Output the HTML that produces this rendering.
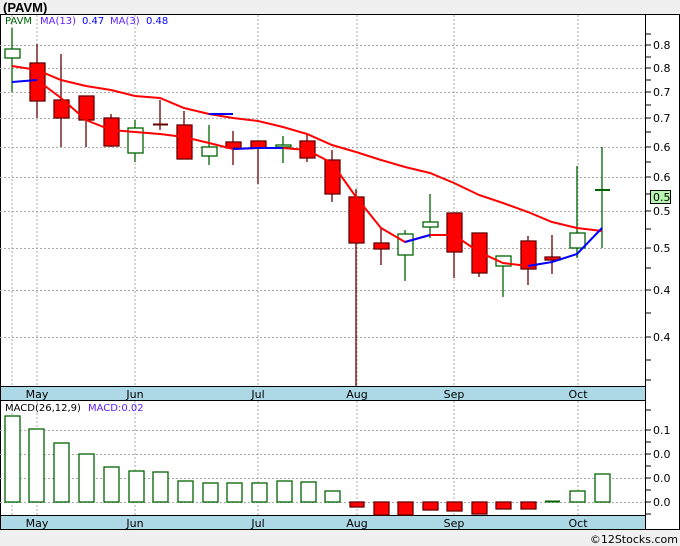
<!DOCTYPE html>
<html><head><style>
body{margin:0;width:680px;height:546px;overflow:hidden;background:#fff;font-family:"DejaVu Sans","Liberation Sans",sans-serif}
</style></head><body>
<svg width="680" height="546" xmlns="http://www.w3.org/2000/svg" style="position:absolute;left:0;top:0" font-family="DejaVu Sans, Liberation Sans, sans-serif">
<rect x="0" y="0" width="680" height="546" fill="#f0f0f0"/>
<text x="3" y="12" font-size="13" font-weight="bold" font-family="Liberation Sans, sans-serif" fill="#000">(PAVM)</text>
<rect x="0.5" y="14.5" width="679" height="515" fill="#fff" stroke="#000"/>
<!-- grids -->
<g stroke="#aaa" stroke-dasharray="2,2" stroke-width="1">
<path d="M12 15V387M37 15V387M135 15V387M258 15V387M357 15V387M454 15V387M578 15V387"/>
<path d="M12 401V516M37 401V516M135 401V516M258 401V516M357 401V516M454 401V516M578 401V516"/>
<path d="M0 45.5H645M0 68.5H645M0 92.5H645M0 118.5H645M0 147.5H645M0 177.5H645M0 211.5H645M0 248.5H645M0 290.5H645M0 337.5H645"/>
<path d="M0 430.5H645M0 454.5H645M0 478.5H645M0 502.5H645"/>
</g>
<!-- axis bands -->
<rect x="0.5" y="386.5" width="645" height="14" fill="#add8e6" stroke="#000"/>
<rect x="0.5" y="515.5" width="645" height="14" fill="#add8e6" stroke="#000"/>
<line x1="645.5" y1="14" x2="645.5" y2="530" stroke="#000"/>
<g font-size="11" fill="#000" text-anchor="middle">
<text x="37" y="398">May</text><text x="135" y="398">Jun</text><text x="258" y="398">Jul</text><text x="357" y="398">Aug</text><text x="454" y="398">Sep</text><text x="578" y="398">Oct</text>
<text x="37" y="527">May</text><text x="135" y="527">Jun</text><text x="258" y="527">Jul</text><text x="357" y="527">Aug</text><text x="454" y="527">Sep</text><text x="578" y="527">Oct</text>
</g>
<!-- right axis ticks -->
<g stroke="#000">
<path d="M645 34h6M645 45h6M645 57h6M645 68h6M645 80h6M645 92h6M645 105h6M645 118h6M645 132h6M645 147h6M645 162h6M645 177h6M645 194h6M645 211h6M645 229h6M645 248h6M645 268h6M645 290h6M645 313h6M645 337h6M645 360h6M645 380h6"/>
<path d="M645 410h6M645 430h6M645 442h6M645 454h6M645 466h6M645 478h6M645 490h6M645 502h6M645 514h6"/>
</g>
<g font-size="11" fill="#000">
<text x="653" y="49">0.8</text><text x="653" y="72">0.8</text><text x="653" y="96">0.7</text><text x="653" y="122">0.7</text><text x="653" y="151">0.6</text><text x="653" y="181">0.6</text><text x="653" y="215">0.5</text><text x="653" y="252">0.5</text><text x="653" y="294">0.4</text><text x="653" y="341">0.4</text>
<text x="653" y="434">0.1</text><text x="653" y="458">0.0</text><text x="653" y="482">0.0</text><text x="653" y="506">0.0</text>
</g>
<rect x="650.5" y="190.5" width="20" height="13" fill="#b8f5b0" stroke="#000"/>
<text x="653" y="201" font-size="11">0.5</text>
<!-- legend -->
<text x="5" y="24" font-size="10" fill="#006400">PAVM</text>
<text x="40" y="24" font-size="10" fill="#6020ff">MA(13)</text>
<text x="82" y="24" font-size="10" fill="#0000ff">0.47</text>
<text x="110" y="24" font-size="10" fill="#6020ff">MA(3)</text>
<text x="146" y="24" font-size="10" fill="#0000ff">0.48</text>
<text x="5" y="411" font-size="10" fill="#000">MACD(26,12,9)</text>
<text x="88" y="411" font-size="10" fill="#6020ff">MACD:0.02</text>
<!-- wicks -->
<g stroke-width="1.3">
<g stroke="#006400"><path d="M12 28V92M135 120V162M209 125V165M283 136V163M405 230V281M430 194V238M503 256V297M577 166V258M602 147V248"/></g>
<g stroke="#600"><path d="M37 44V118M61 54V147M86 96V147M111 114V147M160 100V130M184 111V147M233 131V165M258 141V184M307 135V162M332 150V202M356 189V386M381 228V265M454 213V278M479 233V277M528 236V285M552 235V274"/></g>
</g>
<!-- bodies -->
<g stroke="#006400" stroke-width="1.3" fill="#fff">
<rect x="5" y="49" width="15" height="9"/><rect x="128" y="128" width="15" height="25"/><rect x="202" y="147" width="15" height="9"/><rect x="276" y="145" width="15" height="2"/><rect x="398" y="234" width="15" height="21"/><rect x="423" y="222" width="15" height="5"/><rect x="496" y="256" width="15" height="10"/><rect x="570" y="233" width="15" height="15"/>
</g>
<path d="M595 190H610" stroke="#006400" stroke-width="2"/>
<path d="M153 124.5H168" stroke="#600" stroke-width="2"/>
<g stroke="#600" stroke-width="1.3" fill="#f00">
<rect x="30" y="63" width="15" height="38"/><rect x="54" y="100" width="15" height="18"/><rect x="79" y="96" width="15" height="24"/><rect x="104" y="118" width="15" height="28"/><rect x="177" y="125" width="15" height="34"/><rect x="226" y="142" width="15" height="6"/><rect x="251" y="141" width="15" height="7"/><rect x="300" y="141" width="15" height="17"/><rect x="325" y="160" width="15" height="34"/><rect x="349" y="197" width="15" height="46"/><rect x="374" y="243" width="15" height="6"/><rect x="447" y="213" width="15" height="39"/><rect x="472" y="233" width="15" height="40"/><rect x="521" y="241" width="15" height="28"/><rect x="545" y="257" width="15" height="3"/>
</g>
<!-- MAs -->
<polyline fill="none" stroke="#f00" stroke-width="2" points="12,66 37,70 61,80 86,86 111,90 135,96 160,98 184,108 209,114 233,118 258,121 283,127 307,134 332,145 356,152 381,160 405,167 430,173 454,183 479,195 503,203 528,212 552,222 577,228 602,231"/>
<polyline fill="none" stroke="#f00" stroke-width="2" points="37,80 61,98 86,120 111,130 135,132 160,134 184,137 209,143 233,149 258,148 283,148 307,150 332,163 356,197 381,228 405,242 430,235 454,235 479,252 503,263 528,266"/>
<g fill="none" stroke="#00f" stroke-width="2">
<polyline points="12,82 37,80"/><polyline points="209,114 233,114"/><polyline points="233,149 258,148 283,148"/><polyline points="405,242 430,235"/><polyline points="528,266 552,262 577,254 602,228"/>
</g>
<!-- MACD bars -->
<g stroke="#006400" stroke-width="1.3" fill="#fff">
<rect x="5" y="416" width="15" height="86"/><rect x="29" y="429" width="15" height="73"/><rect x="54" y="443" width="15" height="59"/><rect x="79" y="454" width="15" height="48"/><rect x="104" y="467" width="15" height="35"/><rect x="129" y="471" width="15" height="31"/><rect x="153" y="472" width="15" height="30"/><rect x="178" y="481" width="15" height="21"/><rect x="203" y="483" width="15" height="19"/><rect x="227" y="483" width="15" height="19"/><rect x="252" y="483" width="15" height="19"/><rect x="277" y="481" width="15" height="21"/><rect x="301" y="482" width="15" height="20"/><rect x="325" y="491" width="15" height="11"/><rect x="570" y="491" width="15" height="11"/><rect x="595" y="474" width="15" height="28"/>
</g>
<path d="M545 501.5H560" stroke="#006400" stroke-width="2"/>
<g stroke="#600" stroke-width="1.3" fill="#f00">
<rect x="350" y="502" width="14" height="5"/><rect x="374" y="502" width="15" height="13"/><rect x="398" y="502" width="15" height="13"/><rect x="423" y="502" width="15" height="8"/><rect x="447" y="502" width="15" height="9"/><rect x="472" y="502" width="15" height="12"/><rect x="496" y="502" width="15" height="7"/><rect x="521" y="502" width="15" height="7"/>
</g>
<text x="678" y="543" font-size="11" text-anchor="end" fill="#000">©12Stocks.com</text>
</svg>
</body></html>
